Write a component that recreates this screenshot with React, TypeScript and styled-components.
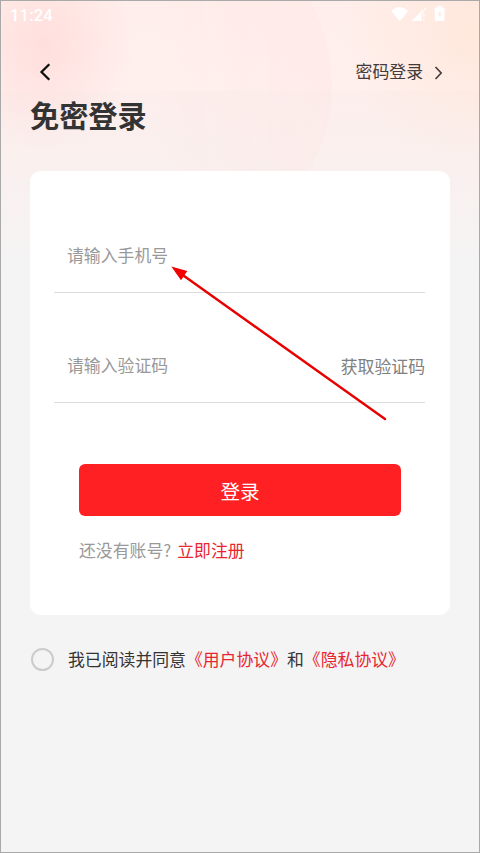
import React from "react";
import styled, { createGlobalStyle } from "styled-components";

const GlobalStyle = createGlobalStyle`
  html, body { margin: 0; padding: 0; background: #f4f4f4; }
  * { box-sizing: border-box; }
  button, input { font: inherit; border: 0; padding: 0; margin: 0; background: none; }
`;

const Screen = styled.main`
  position: relative;
  isolation: isolate;
  width: 480px;
  height: 853px;
  overflow: hidden;
  border: 1px solid #a9a9a9;
  display: flex;
  flex-direction: column;
  font-family: "Noto Sans CJK SC", "Noto Sans", sans-serif;
  font-size: 16.85px;
  line-height: 24px;
  color: #333;
  background:
    radial-gradient(ellipse 90px 105px at 42px 45px, rgba(255, 203, 201, 0.45), rgba(255, 210, 208, 0.28) 50%, rgba(255, 220, 218, 0) 100%),
    radial-gradient(ellipse 150px 130px at 485px 32px, rgba(255, 228, 210, 0.65), rgba(255, 232, 218, 0) 100%),
    linear-gradient(180deg, #ffeeeb 0, #fff0ee 90px, #fceeec 90px, #faf0ee 160px, #f7f2f1 215px, #f4f4f4 270px);
`;

/* Large faint disc behind the header; only its right rim shows. */
const Disc = styled.div`
  position: absolute;
  z-index: -1;
  left: -13px;
  top: -88px;
  width: 344px;
  height: 344px;
  border-radius: 50%;
  background: rgba(255, 222, 222, 0.22);
  -webkit-mask-image: linear-gradient(90deg, transparent 50%, #000 98%);
  mask-image: linear-gradient(90deg, transparent 50%, #000 98%);
`;

const StatusBar = styled.div`
  display: flex;
  align-items: center;
  justify-content: space-between;
  height: 30px;
  padding: 0 32px 0 9px;
  color: #fff;
`;

const Clock = styled.span`
  margin-top: -1px;
  font-family: Roboto, sans-serif;
  font-size: 16.5px;
  font-weight: 500;
  letter-spacing: 0.2px;
`;

const StatusIcons = styled.svg`
  display: block;
  width: 56px;
  height: 18px;
  margin-top: -4px;
`;

const NavBar = styled.nav`
  display: flex;
  align-items: center;
  justify-content: space-between;
  height: 36px;
  margin-top: 23px;
  padding: 0 36px 0 38px;
`;

const IconButton = styled.button`
  display: flex;
  color: #111;
`;

const PasswordLogin = styled.button`
  display: flex;
  align-items: center;
  gap: 11px;
  height: 24px;
  margin-top: -3px;
  color: #443a39;
  svg { margin-top: 5px; }
`;

const Title = styled.h1`
  margin: 3px 0 0 29px;
  font-size: 29.2px;
  line-height: 42px;
  font-weight: 700;
  color: #333;
`;

const Card = styled.form`
  display: flex;
  flex-direction: column;
  width: 420px;
  height: 444px;
  margin: 36px 0 0 29px;
  padding: 0 25px 0 24px;
  border-radius: 11px;
  background: #fff;
`;

const Field = styled.div<{ $height: number }>`
  display: flex;
  align-items: flex-end;
  justify-content: space-between;
  height: ${(p) => p.$height}px;
  padding: 0 0 24px 13px;
  border-bottom: 1px solid #dcdcdc;
`;

const FieldInput = styled.input`
  width: 190px;
  height: 28px;
  outline: none;
  color: #333;
  &::placeholder { color: #999; opacity: 1; }
`;

const CodeButton = styled.button`
  height: 24px;
  color: #808080;
`;

const Submit = styled.button`
  width: 322px;
  height: 52px;
  margin: 61px 0 0 25px;
  padding-top: 2px;
  border-radius: 6px;
  background: #ff2023;
  color: #fff;
  font-size: 19.6px;
  line-height: 28px;
`;

const Register = styled.p`
  display: flex;
  gap: 6px;
  margin: 22px 0 0 25px;
  color: #999;
`;

const Link = styled.a`
  color: #e8252e;
`;

const Agreement = styled.div`
  display: flex;
  align-items: center;
  gap: 14px;
  height: 24px;
  margin: 32px 0 0 30px;
`;

const Radio = styled.span`
  width: 23px;
  height: 23px;
  border: 2px solid #cbcbcb;
  border-radius: 50%;
`;

const Pointer = styled.svg`
  position: absolute;
  left: 169px;
  top: 263px;
  width: 218px;
  height: 158px;
  pointer-events: none;
`;

export default function App() {
  return (
    <>
      <GlobalStyle />
      <Screen>
        <Disc />
        <StatusBar>
          <Clock>11:24</Clock>
          <StatusIcons viewBox="0 0 56 18" fill="#fff">
            <path d="M0.2 6Q8.5-1.8 17.2 6L8.7 16.2Z" />
            <path d="M20.5 16L32.3 4.2V7.5H30.5V16Z" />
            <path d="M33 3h2v2.2h-2zM31.8 8h1.8v4h-1.8zM31.8 14h1.8v2h-1.8z" opacity=".7" />
            <path
              fillRule="evenodd"
              d="M46.7 .8h3.8v1.6h1.6q1.4 0 1.4 1.4v10.6q0 1.6-1.6 1.6h-6.6q-1.6 0-1.6-1.6V3.8q0-1.4 1.4-1.4h1.6zM49.2 5.5l-2.4 4.2h1.6v3l2.4-4.2h-1.6z"
            />
          </StatusIcons>
        </StatusBar>
        <NavBar>
          <IconButton aria-label="返回">
            <svg width="12" height="18" viewBox="0 0 12 18" fill="none" stroke="currentColor" strokeWidth="2.3">
              <path d="M10.3 1.2L2.5 9L10.3 16.8" />
            </svg>
          </IconButton>
          <PasswordLogin>
            密码登录
            <svg width="9" height="14" viewBox="0 0 9 14" fill="none" stroke="currentColor" strokeWidth="1.6">
              <path d="M1.5 1L7.2 7L1.5 13" />
            </svg>
          </PasswordLogin>
        </NavBar>
        <Title>免密登录</Title>
        <Card onSubmit={(e) => e.preventDefault()}>
          <Field $height={122}>
            <FieldInput placeholder="请输入手机号" />
          </Field>
          <Field $height={110}>
            <FieldInput placeholder="请输入验证码" />
            <CodeButton type="button">获取验证码</CodeButton>
          </Field>
          <Submit>登录</Submit>
          <Register>
            <span>还没有账号?</span>
            <Link>立即注册</Link>
          </Register>
        </Card>
        <Agreement>
          <Radio role="radio" aria-checked={false} />
          <span>
            我已阅读并同意<Link>《用户协议》</Link>和<Link>《隐私协议》</Link>
          </span>
        </Agreement>
        <Pointer viewBox="0 0 218 158">
          <path d="M12 10.5L215 155" stroke="#e80000" strokeWidth="2.4" strokeLinecap="round" />
          <path d="M1.3 2.4L17.3 7L11 16.2Z" fill="#f00000" />
        </Pointer>
      </Screen>
    </>
  );
}
